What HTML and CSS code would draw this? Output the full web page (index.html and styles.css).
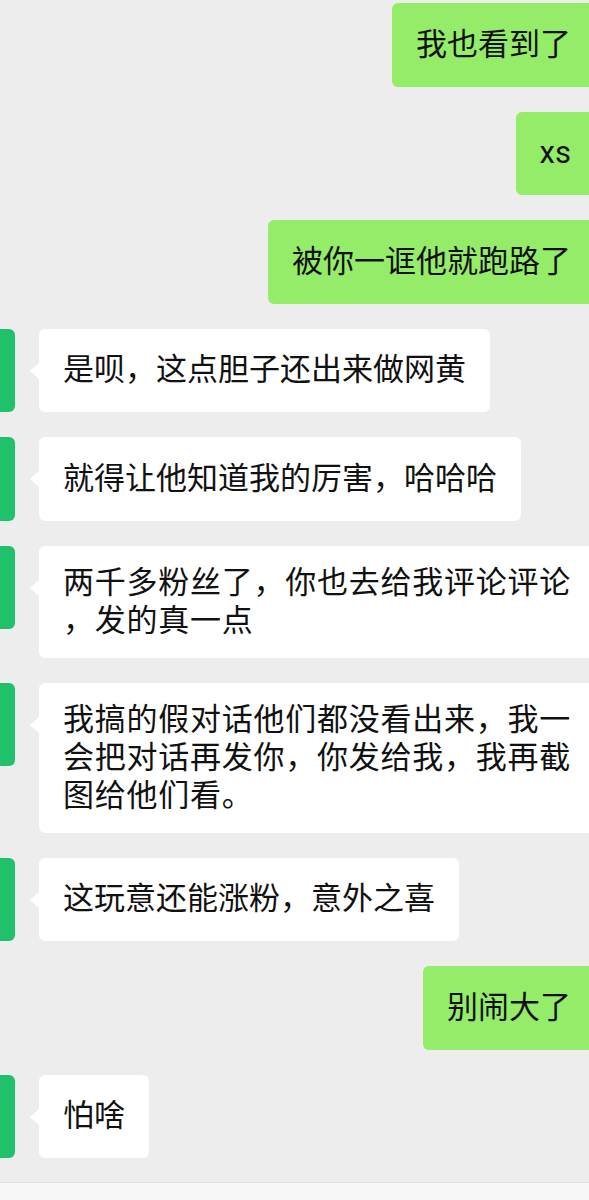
FILE: index.html
```html
<!DOCTYPE html>
<html lang="zh-CN">

<head>
    <title>聊天</title>
    <meta charset="UTF-8">
    <meta name="viewport" content="width=device-width, initial-scale=1">

    <link rel="stylesheet" href="styles.css">
</head>

<body>
    <div id="chat">
        <div class="row mine">
            <div class="bubble"><p>我也看到了</p></div>
        </div>
        <div class="row mine">
            <div class="bubble"><p>xs</p></div>
        </div>
        <div class="row mine">
            <div class="bubble"><p>被你一诓他就跑路了</p></div>
        </div>
        <div class="row other">
            <div class="avatar"></div>
            <div class="bubble"><p>是呗，这点胆子还出来做网黄</p></div>
        </div>
        <div class="row other">
            <div class="avatar"></div>
            <div class="bubble"><p>就得让他知道我的厉害，哈哈哈</p></div>
        </div>
        <div class="row other">
            <div class="avatar"></div>
            <div class="bubble wide"><p>两千多粉丝了，你也去给我评论评论<br>，发的真一点</p></div>
        </div>
        <div class="row other">
            <div class="avatar"></div>
            <div class="bubble wide"><p>我搞的假对话他们都没看出来，我一<br>会把对话再发你，你发给我，我再截<br>图给他们看。</p></div>
        </div>
        <div class="row other">
            <div class="avatar"></div>
            <div class="bubble"><p>这玩意还能涨粉，意外之喜</p></div>
        </div>
        <div class="row mine">
            <div class="bubble"><p>别闹大了</p></div>
        </div>
        <div class="row other">
            <div class="avatar"></div>
            <div class="bubble"><p>怕啥</p></div>
        </div>
    </div>
    <div class="inputbar"></div>
</body>

</html>
```

FILE: styles.css
```css
body {
    background-color: #ededed;
    padding: 0px;
    margin: 0px;
    height: 1200px;
    overflow: hidden;
    display: flex;
    flex-direction: column;
    font-family: Roboto, "Noto Sans CJK SC", sans-serif;
    color: #111;
}

#chat {
    flex: 1;
    display: flex;
    flex-direction: column;
    gap: 25px;
    padding-top: 3px;
    overflow: hidden;
}

.row {
    display: flex;
    align-items: flex-start;
}

.row.mine {
    justify-content: flex-end;
    margin-right: -6px;
}

.row.other {
    gap: 24px;
}

.avatar {
    flex: none;
    width: 83px;
    height: 83.5px;
    margin-left: -68px;
    border-radius: 6px;
    background-color: #1fc16b;
}

.bubble {
    position: relative;
    box-sizing: border-box;
    min-height: 83.5px;
    padding: 18px 24px;
    border-radius: 6px;
    display: flex;
    align-items: center;
    font-size: 31px;
    line-height: 38px;
    white-space: nowrap;
}

.bubble p {
    margin: 0px;
}

.mine .bubble {
    background-color: #95ec69;
}

.other .bubble {
    background-color: #fff;
}

.other .bubble::before {
    content: "";
    position: absolute;
    left: -9px;
    top: 34px;
    border-top: 8px solid transparent;
    border-bottom: 8px solid transparent;
    border-right: 9px solid #fff;
}

.bubble.wide {
    letter-spacing: 0.75px;
}

.inputbar {
    flex: none;
    height: 17px;
    border-top: 1px solid #e2e2e2;
    background-color: #f7f7f7;
}
```
